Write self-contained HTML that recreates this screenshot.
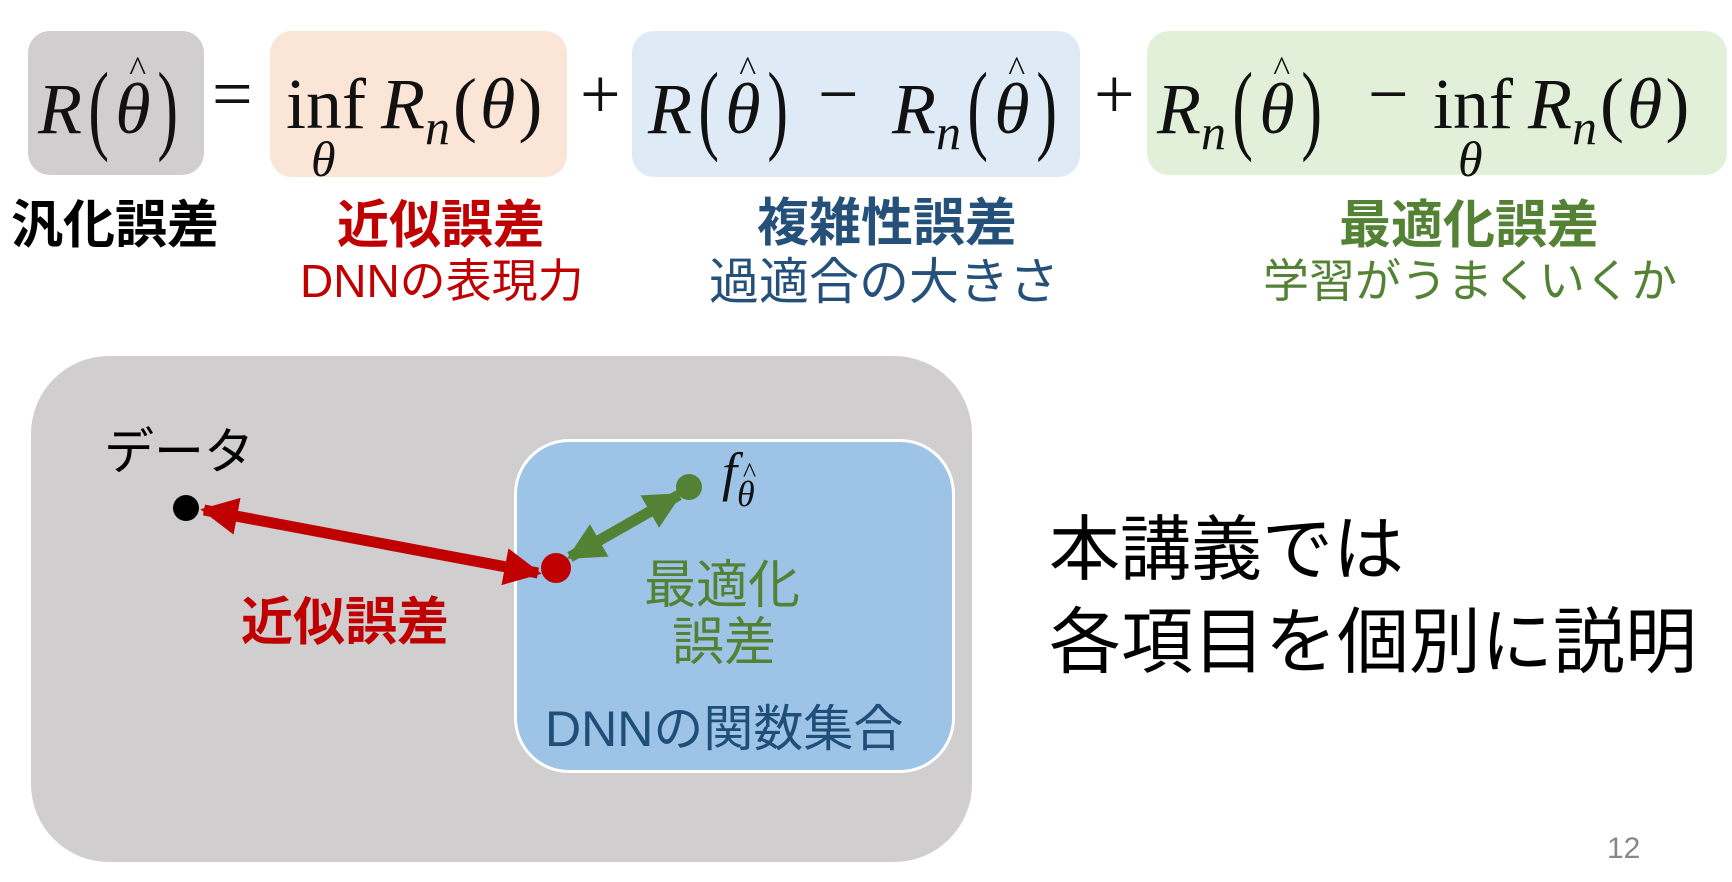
<!DOCTYPE html>
<html><head><meta charset="utf-8"><style>
body{margin:0;width:1732px;height:882px;background:#fff;position:relative;overflow:hidden;font-family:"Liberation Sans","Noto Sans CJK JP",sans-serif;}
.a{position:absolute;white-space:nowrap;}
.box{position:absolute;border-radius:22px;}
.m{font-family:"Liberation Serif","DejaVu Serif",serif;font-size:72px;line-height:1;color:#111;}
.i{font-style:italic;}
.p{font-size:100px;font-style:normal;display:inline-block;transform:scaleX(.62);vertical-align:-8px;margin:0 0px;}
.q{display:inline-block;margin:0 3px;}
.sub{font-size:50px;font-style:italic;vertical-align:-16px;}
.h{position:relative;display:inline-block;font-style:italic;}
.h::after{content:"^";position:absolute;left:14px;top:-22px;font-style:normal;font-size:36px;}
.lab{font-weight:bold;font-size:52px;line-height:1;}
.lab2{font-size:46px;line-height:1;}
</style></head><body>
<div class="box" style="left:28px;top:31px;width:176px;height:144px;background:#d0cecf"></div>
<div class="box" style="left:270px;top:31px;width:297px;height:146px;background:#fbe5d6"></div>
<div class="box" style="left:632px;top:31px;width:448px;height:146px;background:#deebf7"></div>
<div class="box" style="left:1147px;top:31px;width:580px;height:144px;background:#e2f0d9"></div>

<div class="a m" style="left:38px;top:58px"><span class="i">R</span><span class="p">(</span><span class="h">θ</span><span class="p">)</span></div>
<div class="a m" style="left:212px;top:58px">=</div>
<div class="a m" style="left:286px;top:68px">inf</div>
<div class="a m i" style="left:311px;top:134px;font-size:50px">θ</div>
<div class="a m" style="left:381px;top:68px"><span class="i">R</span><span class="sub">n</span><span class="q">(</span><span class="i">θ</span><span class="q">)</span></div>
<div class="a m" style="left:580px;top:58px">+</div>
<div class="a m" style="left:648px;top:58px"><span class="i">R</span><span class="p">(</span><span class="h">θ</span><span class="p">)</span></div>
<div class="a m" style="left:818px;top:58px">−</div>
<div class="a m" style="left:892px;top:58px"><span class="i">R</span><span class="sub">n</span><span class="p">(</span><span class="h">θ</span><span class="p">)</span></div>
<div class="a m" style="left:1094px;top:58px">+</div>
<div class="a m" style="left:1157px;top:58px"><span class="i">R</span><span class="sub">n</span><span class="p">(</span><span class="h">θ</span><span class="p">)</span></div>
<div class="a m" style="left:1368px;top:58px">−</div>
<div class="a m" style="left:1433px;top:68px">inf</div>
<div class="a m i" style="left:1458px;top:134px;font-size:50px">θ</div>
<div class="a m" style="left:1528px;top:68px"><span class="i">R</span><span class="sub">n</span><span class="q">(</span><span class="i">θ</span><span class="q">)</span></div>

<div class="a lab" style="left:11px;top:200px;color:#000">汎化誤差</div>
<div class="a lab" style="left:337px;top:200px;color:#c00000">近似誤差</div>
<div class="a lab2" style="left:300px;top:258px;color:#c00000">DNNの表現力</div>
<div class="a lab" style="left:757px;top:198px;color:#24507a">複雑性誤差</div>
<div class="a lab2" style="left:709px;top:257px;color:#24507a;font-size:50px">過適合の大きさ</div>
<div class="a lab" style="left:1339px;top:200px;color:#548235">最適化誤差</div>
<div class="a lab2" style="left:1263px;top:258px;color:#548235;font-size:46px">学習がうまくいくか</div>

<div class="box" style="left:31px;top:356px;width:941px;height:506px;background:#d0cecf;border-radius:78px"></div>
<div class="box" style="left:514px;top:439px;width:435px;height:328px;background:#9dc3e6;border:3px solid #fff;border-radius:55px"></div>
<div class="a" style="left:104px;top:427px;font-size:50px;line-height:1">データ</div>
<svg class="a" style="left:0;top:0" width="1732" height="882">
<defs>
<marker id="r" viewBox="0 0 10 10" refX="9" refY="5" markerWidth="3.4" markerHeight="3.4" orient="auto-start-reverse"><path d="M0,0L10,5L0,10z" fill="#c00000"/></marker>
<marker id="g" viewBox="0 0 10 10" refX="9" refY="5" markerWidth="3.4" markerHeight="3.4" orient="auto-start-reverse"><path d="M0,0L10,5L0,10z" fill="#548235"/></marker>
</defs>
<line x1="204" y1="510" x2="538" y2="573" stroke="#c00000" stroke-width="11" marker-start="url(#r)" marker-end="url(#r)"/>
<line x1="570" y1="557" x2="679" y2="495" stroke="#548235" stroke-width="11" marker-start="url(#g)" marker-end="url(#g)"/>
<circle cx="186" cy="508" r="13" fill="#000"/>
<circle cx="556" cy="568" r="15" fill="#c00000"/>
<circle cx="689" cy="487" r="13" fill="#548235"/>
</svg>
<div class="a m i" style="left:722px;top:445px;font-size:54px">f<span style="font-size:36px;vertical-align:-16px;position:relative;display:inline-block">θ<span style="position:absolute;left:6px;top:-16px;font-style:normal;font-size:28px">^</span></span></div>
<div class="a lab" style="left:241px;top:597px;color:#c00000">近似誤差</div>
<div class="a lab" style="left:644px;top:560px;color:#548235;font-weight:normal">最適化</div>
<div class="a lab" style="left:672px;top:617px;color:#548235;font-weight:normal">誤差</div>
<div class="a" style="left:545px;top:704px;font-size:50px;line-height:1;color:#1f4e79">DNNの関数集合</div>
<div class="a" style="left:1049px;top:515px;font-size:71px;line-height:1">本講義では</div>
<div class="a" style="left:1049px;top:607px;font-size:72px;line-height:1">各項目を個別に説明</div>
<div class="a" style="left:1607px;top:834px;font-size:30px;color:#888;line-height:1">12</div>
</body></html>
